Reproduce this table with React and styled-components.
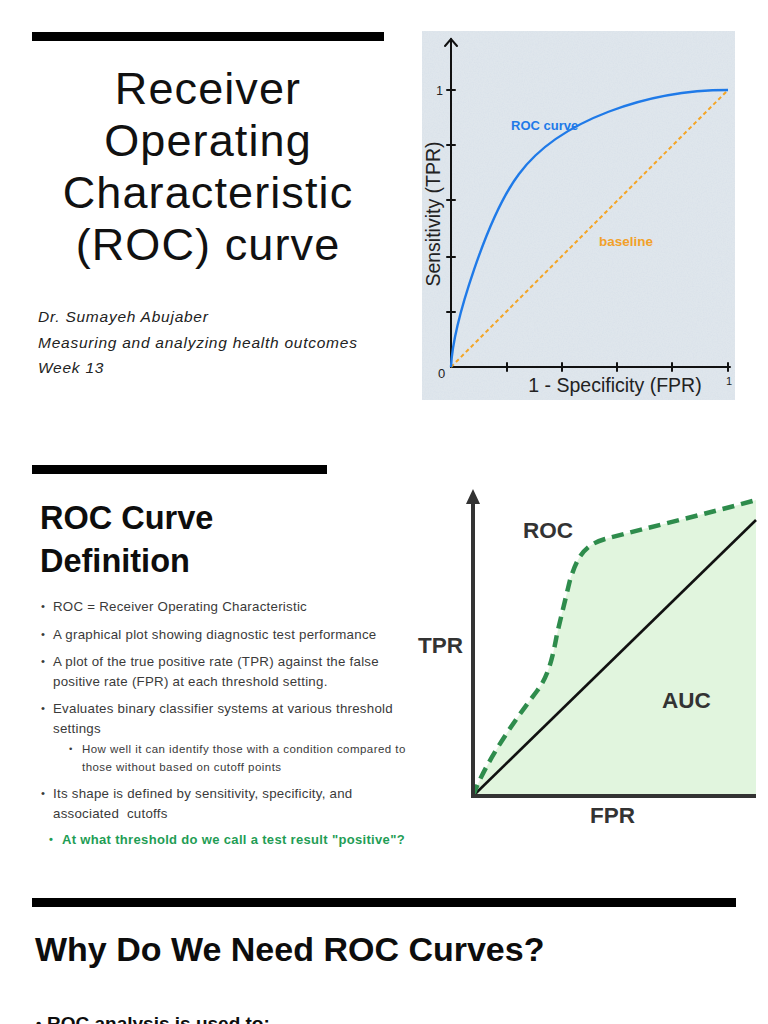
import React from "react";
import styled, { createGlobalStyle } from "styled-components";

const Global = createGlobalStyle`
  html, body { margin: 0; padding: 0; background: #ffffff; }
  body { font-family: "Liberation Sans", Arial, sans-serif; color: #111; }
`;

const Page = styled.div`
  width: 768px;
  background: #fff;
`;

const Slide = styled.section`
  height: 433px;
  box-sizing: border-box;
  display: flex;
  align-items: flex-start;
  padding: 32px ${(p) => (p.$padRight ? "32px" : "0")} 0 32px;
  overflow: hidden;
  flex-direction: ${(p) => (p.$column ? "column" : "row")};
`;

const Column = styled.div`
  width: ${(p) => p.$w}px;
  flex: none;
  display: flex;
  flex-direction: column;
`;

const Bar = styled.div`
  height: 9px;
  width: ${(p) => (p.$w ? `${p.$w}px` : "100%")};
  background: #000;
`;

const CoverTitle = styled.h1`
  margin: 22px 0 0;
  text-align: center;
  font-family: "Liberation Sans", Arial, sans-serif;
  font-weight: 400;
  font-size: 45px;
  letter-spacing: 1.1px;
  line-height: 52px;
  color: #111;
`;

const Byline = styled.div`
  margin: 33px 0 0 6px;
  font-style: italic;
  font-size: 15.5px;
  letter-spacing: 0.75px;
  line-height: 25.5px;
  color: #222;
  white-space: nowrap;
`;

const ChartFrame = styled.div`
  margin: -1px 0 0 38px;
  width: 313px;
  height: 369px;
  flex: none;
  svg { display: block; }
`;

const SectionTitle = styled.h2`
  margin: ${(p) => p.$mt}px 0 0 ${(p) => p.$ml}px;
  font-family: "Liberation Sans", Arial, sans-serif;
  font-weight: 700;
  font-size: ${(p) => p.$size}px;
  line-height: ${(p) => p.$lh}px;
  color: #0d0d0d;
  white-space: nowrap;
`;

const List = styled.div`
  margin-top: 14px;
  display: flex;
  flex-direction: column;
`;

const levels = {
  main: { dot: 9, text: 21, size: 13.3, ls: 0.25, lh: 19.5, mt: 8, color: "#3a3a3a", weight: 400 },
  sub: { dot: 37, text: 50, size: 11.5, ls: 0.45, lh: 18, mt: 2, color: "#3a3a3a", weight: 400 },
  green: { dot: 17, text: 30, size: 13, ls: 0.33, lh: 19.5, mt: 7, color: "#1f9d55", weight: 700 },
};

const Item = styled.div`
  position: relative;
  padding-left: ${(p) => levels[p.$level].text}px;
  margin-top: ${(p) => (p.$first ? 0 : levels[p.$level].mt)}px;
  font-size: ${(p) => levels[p.$level].size}px;
  letter-spacing: ${(p) => levels[p.$level].ls}px;
  line-height: ${(p) => levels[p.$level].lh}px;
  color: ${(p) => levels[p.$level].color};
  font-weight: ${(p) => levels[p.$level].weight};
  white-space: nowrap;
`;

const Dot = styled.span`
  position: absolute;
  left: ${(p) => levels[p.$level].dot}px;
  top: 0;
  font-size: ${(p) => levels[p.$level].size - 2}px;
`;

const PlotWrap = styled.div`
  margin-top: 15px;
  flex: none;
  svg { display: block; }
`;

const WhyBullet = styled.div`
  margin: 43px 0 0 5px;
  position: relative;
  padding-left: 10px;
  font-size: 19px;
  font-weight: 700;
  line-height: 24px;
  color: #0d0d0d;
  &::before {
    content: "•";
    position: absolute;
    left: -1px;
    top: 0;
    font-size: 15px;
  }
`;

function Bullet({ level, first, children }) {
  return (
    <Item $level={level} $first={first}>
      <Dot $level={level}>•</Dot>
      {children}
    </Item>
  );
}

function RocSketch() {
  const yTicks = [59, 114, 169, 226, 281];
  const xTicks = [85, 140, 195, 250, 306];
  return (
    <svg width="313" height="369" viewBox="0 0 313 369">
      <defs>
        <filter id="grain" x="0" y="0" width="100%" height="100%">
          <feTurbulence type="fractalNoise" baseFrequency="0.8" numOctaves="2" seed="3" stitchTiles="stitch" />
          <feColorMatrix
            type="matrix"
            values="0 0 0 0 0.6  0 0 0 0 0.67  0 0 0 0 0.78  0.7 0 0 0 -0.25"
          />
        </filter>
      </defs>
      <rect width="313" height="369" fill="#dfe6ec" />
      <rect width="313" height="369" filter="url(#grain)" opacity="0.7" />
      <g stroke="#111" strokeWidth="2" fill="none" strokeLinecap="round">
        <line x1="29" y1="8" x2="29" y2="336" />
        <polyline points="23,15 29,8 35,15" />
        <line x1="29" y1="336" x2="308" y2="336" />
        {yTicks.map((y) => (
          <line key={y} x1="25" y1={y} x2="33" y2={y} />
        ))}
        {xTicks.map((x) => (
          <line key={x} x1={x} y1="332" x2={x} y2="340" />
        ))}
      </g>
      <line x1="29" y1="336" x2="306" y2="59" stroke="#f5a524" strokeWidth="2" strokeDasharray="4 3" />
      <path
        d="M29,336 C31,292 66,184 97,143 C137,89 226,59 306,59"
        fill="none"
        stroke="#1f7ae8"
        strokeWidth="2.4"
      />
      <g fontFamily="Liberation Sans, Arial, sans-serif" fill="#222">
        <text x="17.5" y="63.5" fontSize="12" textAnchor="middle">1</text>
        <text x="19.5" y="347" fontSize="13" textAnchor="middle">0</text>
        <text x="307" y="354" fontSize="11" textAnchor="middle">1</text>
        <text x="193" y="361" fontSize="19.5" textAnchor="middle">1 - Specificity (FPR)</text>
        <text transform="translate(18,183) rotate(-90)" fontSize="19.5" textAnchor="middle">
          Sensitivity (TPR)
        </text>
      </g>
      <g fontFamily="Liberation Sans, Arial, sans-serif" fontWeight="700">
        <text x="89" y="99" fontSize="13" fill="#1f7ae8">ROC curve</text>
        <text x="177" y="215" fontSize="13.5" fill="#f2a12a">baseline</text>
      </g>
    </svg>
  );
}

function AucPlot() {
  const curve =
    "M63,316 C75,283 104,241 127,211 C137,198 142,182 147,154 L160,100 C168,75 175,65 195,59 C240,47 300,33 346,20";
  return (
    <svg width="358" height="360" viewBox="0 0 358 360">
      <path d={`${curve} L346,316 Z`} fill="#e1f5de" />
      <line x1="63" y1="316" x2="346" y2="40" stroke="#111" strokeWidth="2.6" />
      <path d={curve} fill="none" stroke="#2e8c4c" strokeWidth="4.5" strokeDasharray="12 7" />
      <line x1="63" y1="22" x2="63" y2="318" stroke="#333" strokeWidth="4" />
      <polygon points="63,9 56,24 70,24" fill="#333" />
      <line x1="61" y1="316" x2="346" y2="316" stroke="#333" strokeWidth="4" />
      <g fontFamily="Liberation Sans, Arial, sans-serif" fontWeight="700" fill="#333" fontSize="22.5">
        <text x="113" y="58">ROC</text>
        <text x="8" y="173">TPR</text>
        <text x="252" y="228">AUC</text>
        <text x="180" y="343">FPR</text>
      </g>
    </svg>
  );
}

export default function App() {
  return (
    <Page>
      <Global />
      <Slide>
        <Column $w={352}>
          <Bar />
          <CoverTitle>
            Receiver
            <br />
            Operating
            <br />
            Characteristic
            <br />
            (ROC) curve
          </CoverTitle>
          <Byline>
            Dr. Sumayeh Abujaber
            <br />
            Measuring and analyzing health outcomes
            <br />
            Week 13
          </Byline>
        </Column>
        <ChartFrame>
          <RocSketch />
        </ChartFrame>
      </Slide>

      <Slide>
        <Column $w={378}>
          <Bar $w={295} />
          <SectionTitle $mt={23} $ml={8} $size={32.5} $lh={43}>
            ROC Curve
            <br />
            Definition
          </SectionTitle>
          <List>
            <Bullet level="main" first>
              ROC = Receiver Operating Characteristic
            </Bullet>
            <Bullet level="main">A graphical plot showing diagnostic test performance</Bullet>
            <Bullet level="main">
              A plot of the true positive rate (TPR) against the false
              <br />
              positive rate (FPR) at each threshold setting.
            </Bullet>
            <Bullet level="main">
              Evaluates binary classifier systems at various threshold
              <br />
              settings
            </Bullet>
            <Bullet level="sub">
              How well it can identify those with a condition compared to
              <br />
              those without based on cutoff points
            </Bullet>
            <Bullet level="main">
              Its shape is defined by sensitivity, specificity, and
              <br />
              associated&nbsp; cutoffs
            </Bullet>
            <Bullet level="green">At what threshold do we call a test result "positive"?</Bullet>
          </List>
        </Column>
        <PlotWrap>
          <AucPlot />
        </PlotWrap>
      </Slide>

      <Slide $column $padRight>
        <Bar />
        <SectionTitle $mt={22} $ml={3} $size={34} $lh={40}>
          Why Do We Need ROC Curves?
        </SectionTitle>
        <WhyBullet>ROC analysis is used to:</WhyBullet>
      </Slide>
    </Page>
  );
}
